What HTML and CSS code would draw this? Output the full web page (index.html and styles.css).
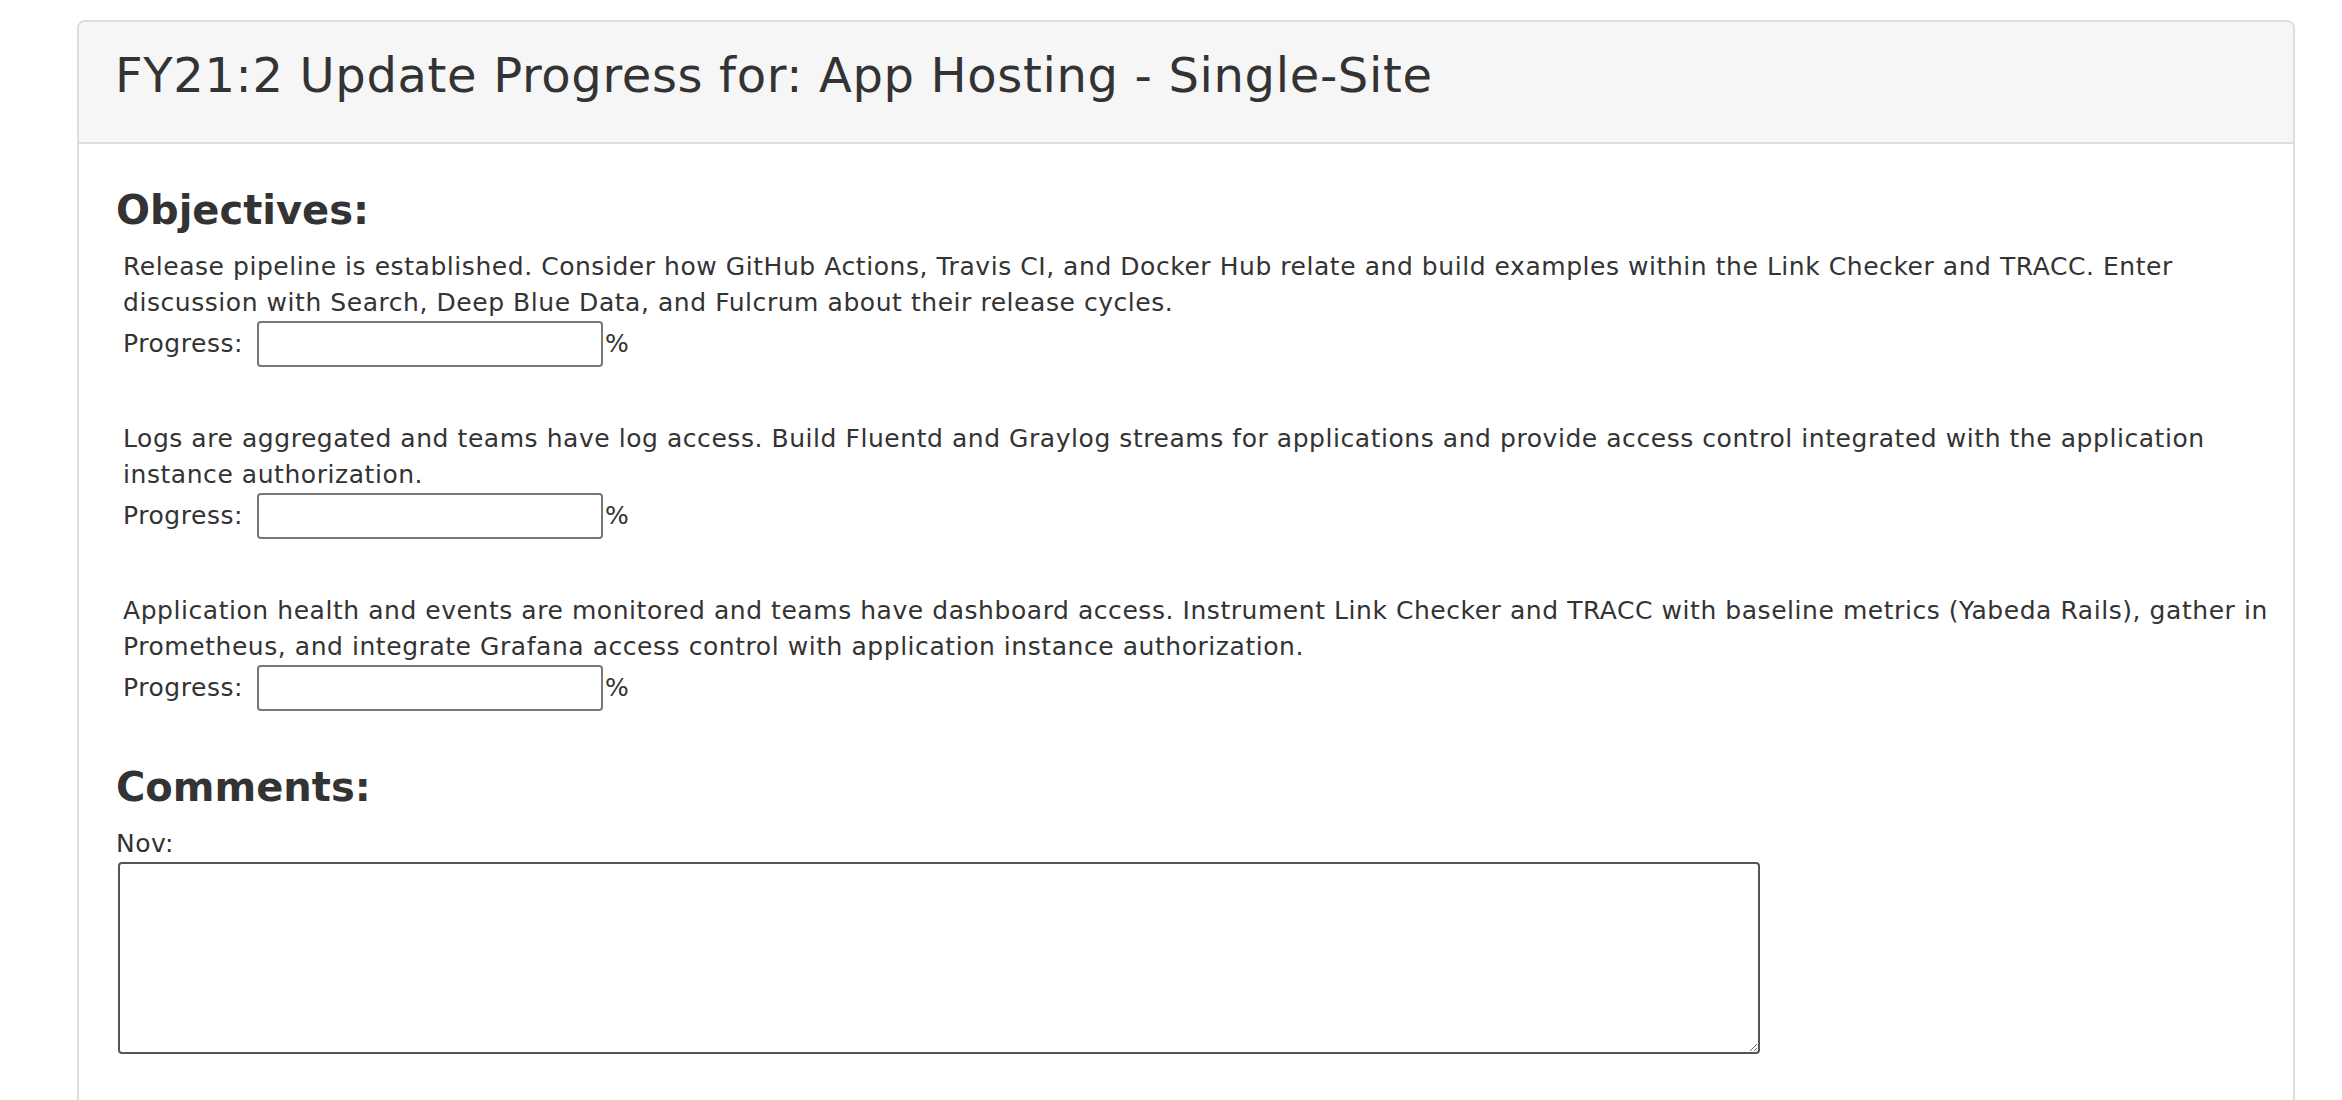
FILE: index.html
```html
<!DOCTYPE html>
<html lang="en">
<head>
<meta charset="utf-8">
<title>FY21:2 Update Progress</title>
<link rel="stylesheet" href="styles.css">
</head>
<body>
<div class="page">
  <div class="panel">
    <div class="panel-heading">
      <h1 class="panel-title">FY21:2 Update Progress for: App Hosting - Single-Site</h1>
    </div>
    <div class="panel-body">
      <section class="objectives">
        <h2 class="section-title">Objectives:</h2>
        <div class="objective">
          <p class="objective-text">Release pipeline is established. Consider how GitHub Actions, Travis CI, and Docker Hub relate and build examples within the Link Checker and TRACC. Enter discussion with Search, Deep Blue Data, and Fulcrum about their release cycles.</p>
          <div class="progress-row">
            <label class="progress-label" for="p1">Progress:</label>
            <input class="progress-input" id="p1" type="text">
            <span class="percent">%</span>
          </div>
        </div>
        <div class="objective">
          <p class="objective-text">Logs are aggregated and teams have log access. Build Fluentd and Graylog streams for applications and provide access control integrated with the application instance authorization.</p>
          <div class="progress-row">
            <label class="progress-label" for="p2">Progress:</label>
            <input class="progress-input" id="p2" type="text">
            <span class="percent">%</span>
          </div>
        </div>
        <div class="objective">
          <p class="objective-text">Application health and events are monitored and teams have dashboard access. Instrument Link Checker and TRACC with baseline metrics (Yabeda Rails), gather in Prometheus, and integrate Grafana access control with application instance authorization.</p>
          <div class="progress-row">
            <label class="progress-label" for="p3">Progress:</label>
            <input class="progress-input" id="p3" type="text">
            <span class="percent">%</span>
          </div>
        </div>
      </section>
      <section class="comments">
        <h2 class="section-title">Comments:</h2>
        <label class="comment-label" for="nov">Nov:</label>
        <textarea class="comment-box" id="nov"></textarea>
      </section>
    </div>
  </div>
</div>
</body>
</html>
```

FILE: styles.css
```css
* {
  box-sizing: border-box;
}

body {
  margin: 0;
  background: #ffffff;
  color: #333333;
  font-family: "DejaVu Sans", Verdana, sans-serif;
  font-size: 25px;
  letter-spacing: 0.55px;
  line-height: 36px;
}

.page {
  padding: 20px 47px 0 77px;
}

.panel {
  border: 2px solid #dddddd;
  border-radius: 8px;
  background: #ffffff;
}

.panel-heading {
  background: #f6f6f6;
  border-bottom: 2px solid #dddddd;
  border-radius: 6px 6px 0 0;
  padding: 27px 36px 40px;
}

.panel-title {
  margin: 0;
  font-size: 48px;
  font-weight: normal;
  letter-spacing: 0.65px;
  line-height: 52.8px;
  color: #333333;
}

.panel-body {
  padding: 44px 2px 60px 37px;
}

.section-title {
  margin: 0 0 17px;
  font-size: 40px;
  font-weight: bold;
  letter-spacing: 0;
  line-height: 44px;
  color: #333333;
}

.comments .section-title {
  margin-top: 6px;
}

.objective {
  margin: 0 0 54px 7px;
}

.objective-text {
  margin: 0;
}

.progress-row {
  display: flex;
  align-items: center;
  height: 46px;
}

.progress-label {
  margin-right: 14px;
}

.progress-input {
  width: 346px;
  height: 46px;
  border: 2px solid #767676;
  border-radius: 4px;
  font-family: inherit;
  font-size: 24px;
  padding: 2px 6px;
  background: #ffffff;
}

.percent {
  margin-left: 2px;
}

.comment-label {
  display: block;
}

.comment-box {
  display: block;
  margin-left: 2px;
  width: 1642px;
  height: 192px;
  border: 2px solid #555555;
  border-radius: 4px;
  font-family: inherit;
  font-size: 24px;
  padding: 4px 6px;
}
```
